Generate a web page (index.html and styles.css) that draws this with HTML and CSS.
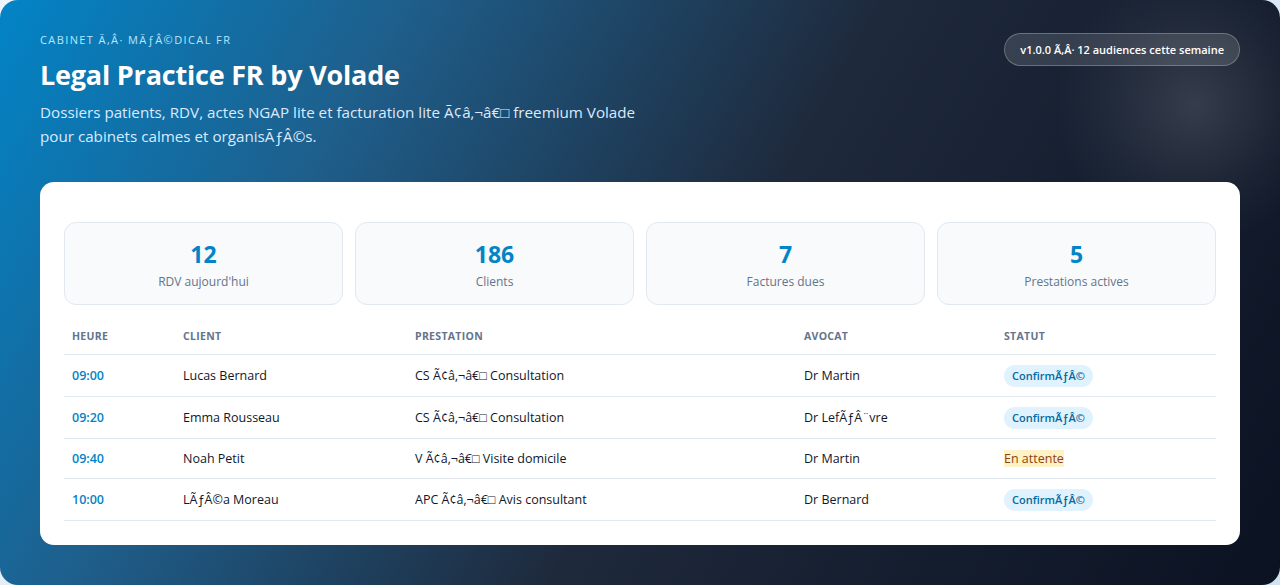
FILE: index.html
```html
<!DOCTYPE html>
<html lang="fr">
<head>
  <meta charset="UTF-8" />
  <meta name="viewport" content="width=device-width, initial-scale=1.0"/>
  <title>Legal Practice FR by Volade</title>
  <link rel="stylesheet" href="styles.css">
</head>
<body>
  <div class="shell">
    <header class="hero">
      <div class="hero-text">
        <div class="hero-eyebrow">CABINET Ã‚Â· MÃƒÂ©DICAL FR</div>
        <h1 class="hero-title">Legal Practice FR by Volade</h1>
        <p class="hero-sub">Dossiers patients, RDV, actes NGAP lite et facturation lite Ã¢â‚¬â€□ freemium Volade pour cabinets calmes et organisÃƒÂ©s.</p>
      </div>
      <div class="hero-pill">v1.0.0 Ã‚Â· 12 audiences cette semaine</div>
    </header>

    <main class="panel">
      <div class="stats">
        <div class="stat-card">
          <div class="stat-value">12</div>
          <div class="stat-label">RDV aujourd'hui</div>
        </div>
        <div class="stat-card">
          <div class="stat-value">186</div>
          <div class="stat-label">Clients</div>
        </div>
        <div class="stat-card">
          <div class="stat-value">7</div>
          <div class="stat-label">Factures dues</div>
        </div>
        <div class="stat-card">
          <div class="stat-value">5</div>
          <div class="stat-label">Prestations actives</div>
        </div>
      </div>

      <table class="rdv-table">
        <colgroup>
          <col class="col-heure">
          <col class="col-client">
          <col class="col-prestation">
          <col class="col-avocat">
          <col class="col-statut">
        </colgroup>
        <thead>
          <tr>
            <th>Heure</th>
            <th>Client</th>
            <th>Prestation</th>
            <th>Avocat</th>
            <th>Statut</th>
          </tr>
        </thead>
        <tbody>
          <tr>
            <td class="heure">09:00</td>
            <td>Lucas Bernard</td>
            <td>CS Ã¢â‚¬â€□ Consultation</td>
            <td>Dr Martin</td>
            <td><span class="badge">ConfirmÃƒÂ©</span></td>
          </tr>
          <tr>
            <td class="heure">09:20</td>
            <td>Emma Rousseau</td>
            <td>CS Ã¢â‚¬â€□ Consultation</td>
            <td>Dr LefÃƒÂ¨vre</td>
            <td><span class="badge">ConfirmÃƒÂ©</span></td>
          </tr>
          <tr>
            <td class="heure">09:40</td>
            <td>Noah Petit</td>
            <td>V Ã¢â‚¬â€□ Visite domicile</td>
            <td>Dr Martin</td>
            <td><span class="badge-attente">En attente</span></td>
          </tr>
          <tr>
            <td class="heure">10:00</td>
            <td>LÃƒÂ©a Moreau</td>
            <td>APC Ã¢â‚¬â€□ Avis consultant</td>
            <td>Dr Bernard</td>
            <td><span class="badge">ConfirmÃƒÂ©</span></td>
          </tr>
        </tbody>
      </table>
    </main>
  </div>
</body>
</html>
```

FILE: styles.css
```css
* {
  margin: 0;
  padding: 0;
  box-sizing: border-box;
  font-family: 'Open Sans', 'Noto Sans', sans-serif;
}

body {
  background: linear-gradient(135deg, #eef4fa, #cfe2f0);
  height: 585px;
  overflow: hidden;
}

.shell {
  height: 585px;
  border-radius: 18px;
  padding: 32px 40px 40px;
  background:
    radial-gradient(circle at 1195px 105px, rgba(255, 255, 255, 0.14), rgba(255, 255, 255, 0.04) 90px, rgba(255, 255, 255, 0) 140px),
    linear-gradient(120deg, #0284c7 0%, #1e5f8c 25%, #1e293b 55%, #0b1222 100%);
}

.hero {
  display: flex;
  justify-content: space-between;
  align-items: flex-start;
  margin-bottom: 34px;
}

.hero-eyebrow {
  font-size: 11px;
  letter-spacing: 1.4px;
  color: #bae6fd;
  margin-bottom: 10px;
}

.hero-title {
  font-size: 27px;
  font-weight: 700;
  color: white;
  letter-spacing: -0.2px;
  line-height: 36px;
  margin-bottom: 7px;
}

.hero-sub {
  max-width: 620px;
  font-size: 15.2px;
  line-height: 24px;
  color: #dbeafe;
}

.hero-pill {
  margin-top: 1px;
  padding: 8px 15px;
  border-radius: 999px;
  background-color: rgba(255, 255, 255, 0.13);
  border: 1px solid rgba(255, 255, 255, 0.25);
  color: white;
  font-size: 11px;
  font-weight: 600;
  line-height: 15px;
}

.panel {
  background-color: white;
  border-radius: 14px;
  padding: 40px 24px 24px;
}

.stats {
  display: grid;
  grid-template-columns: repeat(4, 1fr);
  gap: 12px;
  margin-bottom: 14px;
}

.stat-card {
  height: 83px;
  background-color: #f8fafc;
  border: 1px solid #e2e8f0;
  border-radius: 12px;
  text-align: center;
  padding-top: 16px;
}

.stat-value {
  font-size: 23px;
  font-weight: 700;
  color: #0284c7;
  line-height: 30px;
}

.stat-label {
  font-size: 12px;
  color: #64748b;
  margin-top: 4px;
}

.rdv-table {
  width: 100%;
  border-collapse: collapse;
  font-size: 12.5px;
  color: #0f172a;
}

.col-heure { width: 111px; }
.col-client { width: 232px; }
.col-prestation { width: 389px; }
.col-avocat { width: 200px; }

.rdv-table th {
  text-align: left;
  font-size: 10.5px;
  font-weight: 700;
  color: #64748b;
  text-transform: uppercase;
  letter-spacing: 0.3px;
  padding: 10px 8px 11px;
  border-bottom: 1px solid #e2e8f0;
}

.rdv-table td {
  padding: 10px 8px 9px;
  line-height: 20px;
  border-bottom: 1px solid #e2e8f0;
}

.rdv-table td.heure {
  color: #0284c7;
  font-weight: 600;
}

.badge {
  display: inline-block;
  vertical-align: middle;
  padding: 2px 8px;
  line-height: 18px;
  border-radius: 999px;
  background-color: #e0f2fe;
  color: #0369a1;
  font-size: 11px;
  font-weight: 600;
}

.badge-attente {
  background-color: #fef3c7;
  color: #92400e;
}
```
